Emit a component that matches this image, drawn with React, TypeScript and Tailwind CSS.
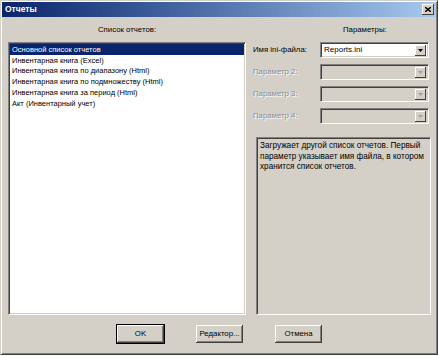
import React from "react";

const font = { fontFamily: '"Liberation Sans", Arial, sans-serif' };

const reports = [
  "Основной список отчетов",
  "Инвентарная книга (Excel)",
  "Инвентарная книга по диапазону (Html)",
  "Инвентарная книга по подмножеству (Html)",
  "Инвентарная книга за период (Html)",
  "Акт (Инвентарный учет)",
];

function Combo({ value, disabled }: { value?: string; disabled?: boolean }) {
  return (
    <div
      className={`flex h-[16px] w-[109px] items-center border border-t-[#808080] border-l-[#808080] border-b-white border-r-white shadow-[inset_1px_1px_0_#404040,inset_-1px_-1px_0_#d4d0c8] ${
        disabled ? "bg-[#d4d0c8]" : "bg-white"
      }`}
    >
      <span className="flex-1 truncate pl-[3px] text-[8px] leading-none text-black">{value}</span>
      <div className="mr-[2px] flex h-[11px] w-[11px] items-center justify-center bg-[#d4d0c8] shadow-[inset_-1px_-1px_0_#404040,inset_1px_1px_0_#ffffff]">
        <svg width="5" height="3" viewBox="0 0 5 3">
          <path d="M0 0h5L2.5 3z" fill={disabled ? "#a0a0a0" : "#000"} />
        </svg>
      </div>
    </div>
  );
}

function Row({ label, value, disabled }: { label: string; value?: string; disabled?: boolean }) {
  return (
    <div className="flex items-center">
      <span
        className={`w-[67px] text-[7.8px] ${
          disabled ? "text-[#8c8c8c] [text-shadow:1px_1px_0_#ffffff]" : "text-black"
        }`}
      >
        {label}
      </span>
      <Combo value={value} disabled={disabled} />
    </div>
  );
}

function Btn({ children, def }: { children: React.ReactNode; def?: boolean }) {
  return (
    <button
      className={`flex h-[18px] w-[47px] items-center justify-center bg-[#d4d0c8] text-[7.8px] text-black shadow-[inset_-1px_-1px_0_#404040,inset_1px_1px_0_#ffffff,inset_-2px_-2px_0_#808080] ${
        def ? "outline outline-1 outline-black" : ""
      }`}
    >
      {children}
    </button>
  );
}

export default function App() {
  return (
    <div className="h-[356px] w-[439px] bg-white" style={font}>
      <div className="flex h-[355px] w-[438px] flex-col border border-t-[#d4d0c8] border-l-[#d4d0c8] border-b-[#404040] border-r-[#404040] bg-[#d4d0c8] shadow-[inset_1px_1px_0_#ffffff,inset_-1px_-1px_0_#808080]">
        <div className="mx-[1px] mt-[1px] flex h-[15px] items-center bg-gradient-to-r from-[#0a246a] to-[#a6caf0] pl-[3px] pr-[2px]">
          <span className="flex-1 text-[8.5px] font-bold text-white">Отчеты</span>
          <div className="flex h-[11px] w-[12px] items-center justify-center bg-[#d4d0c8] shadow-[inset_-1px_-1px_0_#404040,inset_1px_1px_0_#ffffff]">
            <svg width="6" height="5" viewBox="0 0 6 5">
              <path d="M0 0L6 5M6 0L0 5" stroke="#000" strokeWidth="1.4" />
            </svg>
          </div>
        </div>

        <div className="flex">
          <div className="ml-[7px] flex w-[238px] flex-col">
            <div className="flex h-[25px] items-center justify-center text-[7.8px] text-black">Список отчетов:</div>
            <div className="h-[273px] border border-t-[#808080] border-l-[#808080] border-b-white border-r-white bg-white shadow-[inset_1px_1px_0_#404040,inset_-1px_-1px_0_#d4d0c8]">
              <div className="pt-[1px] pl-[1px] pr-[1px]">
                {reports.map((r, i) => (
                  <div
                    key={r}
                    className={`flex h-[10.8px] items-center pl-[2px] text-[7.5px] ${
                      i === 0 ? "bg-[#0a246a] text-white" : "text-black"
                    }`}
                  >
                    {r}
                  </div>
                ))}
              </div>
            </div>
          </div>

          <div className="ml-[7px] flex flex-col">
            <div className="flex h-[25px] items-center pl-[90px] text-[7.8px] text-black">Параметры:</div>
            <div className="flex flex-col gap-[6px]">
              <Row label="Имя ini-файла:" value="Reports.ini" />
              <Row label="Параметр 2:" disabled />
              <Row label="Параметр 3:" disabled />
              <Row label="Параметр 4:" disabled />
            </div>
            <div className="ml-[3px] mt-[13px] h-[178px] w-[175px] border border-t-[#808080] border-l-[#808080] border-b-white border-r-white px-[3px] pt-[3px] text-[8.2px] leading-[10.5px] text-black shadow-[inset_1px_1px_0_#404040,inset_-1px_-1px_0_#d4d0c8]">
              Загружает другой список отчетов. Первый
              <br />
              параметр указывает имя файла, в котором
              <br />
              хранится список отчетов.
            </div>
          </div>
        </div>

        <div className="mt-[10px] flex justify-center gap-[32px] pl-[1px]">
          <Btn def>OK</Btn>
          <Btn>Редактор...</Btn>
          <Btn>Отмена</Btn>
        </div>
      </div>
    </div>
  );
}
